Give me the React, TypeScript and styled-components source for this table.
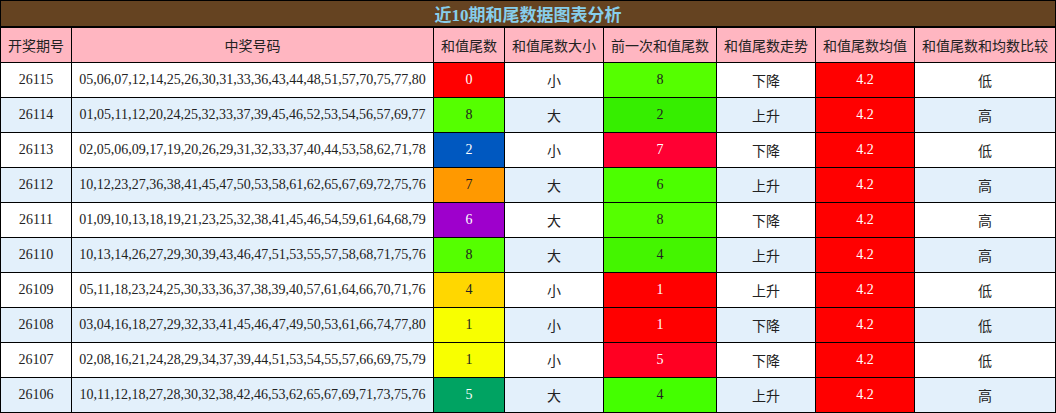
import React from "react";
import styled, { createGlobalStyle } from "styled-components";

const GlobalStyle = createGlobalStyle`
  html, body { margin: 0; padding: 0; background: #fff; }
  body { font-family: "Liberation Serif", "Noto Sans CJK SC", serif; }
`;

const COLS = "70px 361px 70px 98px 112px 98px 98px 140px";

const Table = styled.div`
  width: 1056px;
  box-sizing: border-box;
  background: #000;
  padding: 1px;
  display: flex;
  flex-direction: column;
  gap: 1px;
`;

const Title = styled.div`
  height: 25px;
  margin-bottom: 1px;
  background: #654321;
  color: #87ceeb;
  font-family: "Liberation Serif", "Noto Sans CJK SC", serif;
  font-weight: bold;
  font-size: 17px;
  display: flex;
  align-items: center;
  justify-content: center;
`;

const Row = styled.div`
  display: grid;
  grid-template-columns: ${COLS};
  gap: 1px;
  height: 34px;
`;

const HeadCell = styled.div`
  background: #ffb6c1;
  color: #222;
  font-family: "Noto Sans CJK SC", sans-serif;
  font-size: 14px;
  display: flex;
  align-items: center;
  justify-content: center;
  white-space: nowrap;
`;

const Cell = styled.div<{ $bg?: string; $fg?: string; $alt?: boolean }>`
  background: ${(p) => p.$bg ?? (p.$alt ? "#e3f0fb" : "#ffffff")};
  color: ${(p) => p.$fg ?? "#222"};
  font-family: "Liberation Serif", "Noto Sans CJK SC", serif;
  font-size: 14px;
  display: flex;
  align-items: center;
  justify-content: center;
  white-space: nowrap;
`;

const headers = [
  "开奖期号",
  "中奖号码",
  "和值尾数",
  "和值尾数大小",
  "前一次和值尾数",
  "和值尾数走势",
  "和值尾数均值",
  "和值尾数和均数比较",
];

type Tone = [string, string];
const W = "#ffffff";
const D = "#222222";

interface RowData {
  issue: string;
  nums: string;
  tail: string;
  tailTone: Tone;
  size: string;
  prev: string;
  prevTone: Tone;
  trend: string;
  cmp: string;
}

const rows: RowData[] = [
  { issue: "26115", nums: "05,06,07,12,14,25,26,30,31,33,36,43,44,48,51,57,70,75,77,80", tail: "0", tailTone: ["#ff0000", W], size: "小", prev: "8", prevTone: ["#55ff00", D], trend: "下降", cmp: "低" },
  { issue: "26114", nums: "01,05,11,12,20,24,25,32,33,37,39,45,46,52,53,54,56,57,69,77", tail: "8", tailTone: ["#55ff00", D], size: "大", prev: "2", prevTone: ["#36ee00", D], trend: "上升", cmp: "高" },
  { issue: "26113", nums: "02,05,06,09,17,19,20,26,29,31,32,33,37,40,44,53,58,62,71,78", tail: "2", tailTone: ["#0058c0", W], size: "小", prev: "7", prevTone: ["#ff0033", W], trend: "下降", cmp: "低" },
  { issue: "26112", nums: "10,12,23,27,36,38,41,45,47,50,53,58,61,62,65,67,69,72,75,76", tail: "7", tailTone: ["#ff9900", D], size: "大", prev: "6", prevTone: ["#4cff00", D], trend: "上升", cmp: "高" },
  { issue: "26111", nums: "01,09,10,13,18,19,21,23,25,32,38,41,45,46,54,59,61,64,68,79", tail: "6", tailTone: ["#9e00cc", W], size: "大", prev: "8", prevTone: ["#55ff00", D], trend: "下降", cmp: "高" },
  { issue: "26110", nums: "10,13,14,26,27,29,30,39,43,46,47,51,53,55,57,58,68,71,75,76", tail: "8", tailTone: ["#55ff00", D], size: "大", prev: "4", prevTone: ["#44f500", D], trend: "上升", cmp: "高" },
  { issue: "26109", nums: "05,11,18,23,24,25,30,33,36,37,38,39,40,57,61,64,66,70,71,76", tail: "4", tailTone: ["#ffd700", D], size: "小", prev: "1", prevTone: ["#ff0000", W], trend: "上升", cmp: "低" },
  { issue: "26108", nums: "03,04,16,18,27,29,32,33,41,45,46,47,49,50,53,61,66,74,77,80", tail: "1", tailTone: ["#f8ff00", D], size: "小", prev: "1", prevTone: ["#ff0000", W], trend: "下降", cmp: "低" },
  { issue: "26107", nums: "02,08,16,21,24,28,29,34,37,39,44,51,53,54,55,57,66,69,75,79", tail: "1", tailTone: ["#f8ff00", D], size: "小", prev: "5", prevTone: ["#ff0022", W], trend: "下降", cmp: "低" },
  { issue: "26106", nums: "10,11,12,18,27,28,30,32,38,42,46,53,62,65,67,69,71,73,75,76", tail: "5", tailTone: ["#00a362", W], size: "大", prev: "4", prevTone: ["#44ff00", D], trend: "上升", cmp: "高" },
];

export default function App() {
  return (
    <>
      <GlobalStyle />
      <Table>
        <Title>近10期和尾数据图表分析</Title>
        <Row>
          {headers.map((h) => (
            <HeadCell key={h}>{h}</HeadCell>
          ))}
        </Row>
        {rows.map((r, i) => {
          const alt = i % 2 === 1;
          return (
            <Row key={r.issue}>
              <Cell $alt={alt}>{r.issue}</Cell>
              <Cell $alt={alt}>{r.nums}</Cell>
              <Cell $bg={r.tailTone[0]} $fg={r.tailTone[1]}>{r.tail}</Cell>
              <Cell $alt={alt}>{r.size}</Cell>
              <Cell $bg={r.prevTone[0]} $fg={r.prevTone[1]}>{r.prev}</Cell>
              <Cell $alt={alt}>{r.trend}</Cell>
              <Cell $bg="#ff0000" $fg={W}>4.2</Cell>
              <Cell $alt={alt}>{r.cmp}</Cell>
            </Row>
          );
        })}
      </Table>
    </>
  );
}
